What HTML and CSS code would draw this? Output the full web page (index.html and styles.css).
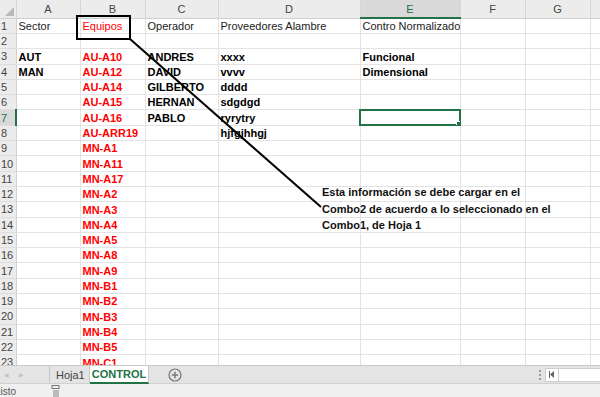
FILE: index.html
```html
<!DOCTYPE html>
<html lang="es">
<head>
  <meta charset="UTF-8">
  <meta name="viewport" content="width=device-width, initial-scale=1.0">
  <title>CONTROL</title>
  <link rel="stylesheet" href="styles.css">
</head>
<body>

<div class="app">
  <div class="sheet">
    <table class="grid">
      <colgroup>
        <col class="c-rh"><col class="c-a"><col class="c-b"><col class="c-c"><col class="c-d">
        <col class="c-e"><col class="c-f"><col class="c-g"><col class="c-h">
      </colgroup>
      <thead>
        <tr>
          <th class="corner"><span class="tri"></span></th>
          <th>A</th><th>B</th><th>C</th><th>D</th><th class="sel">E</th><th>F</th><th>G</th><th></th>
        </tr>
      </thead>
      <tbody>
        <tr><th>1</th><td class="head">Sector</td><td class="head red">Equipos</td><td class="head">Operador</td><td class="head">Proveedores Alambre</td><td class="head">Contro Normalizado</td><td></td><td></td><td></td></tr>
        <tr><th>2</th><td></td><td></td><td></td><td></td><td></td><td></td><td></td><td></td></tr>
        <tr><th>3</th><td>AUT</td><td class="red">AU-A10</td><td>ANDRES</td><td>xxxx</td><td>Funcional</td><td></td><td></td><td></td></tr>
        <tr><th>4</th><td>MAN</td><td class="red">AU-A12</td><td>DAVID</td><td>vvvv</td><td>Dimensional</td><td></td><td></td><td></td></tr>
        <tr><th>5</th><td></td><td class="red">AU-A14</td><td>GILBERTO</td><td>dddd</td><td></td><td></td><td></td><td></td></tr>
        <tr><th>6</th><td></td><td class="red">AU-A15</td><td>HERNAN</td><td>sdgdgd</td><td></td><td></td><td></td><td></td></tr>
        <tr><th class="sel">7</th><td></td><td class="red">AU-A16</td><td>PABLO</td><td>ryrytry</td><td class="active"></td><td></td><td></td><td></td></tr>
        <tr><th>8</th><td></td><td class="red">AU-ARR19</td><td></td><td>hjfgjhhgj</td><td></td><td></td><td></td><td></td></tr>
        <tr><th>9</th><td></td><td class="red">MN-A1</td><td></td><td></td><td></td><td></td><td></td><td></td></tr>
        <tr><th>10</th><td></td><td class="red">MN-A11</td><td></td><td></td><td></td><td></td><td></td><td></td></tr>
        <tr><th>11</th><td></td><td class="red">MN-A17</td><td></td><td></td><td></td><td></td><td></td><td></td></tr>
        <tr><th>12</th><td></td><td class="red">MN-A2</td><td></td><td></td><td></td><td></td><td></td><td></td></tr>
        <tr><th>13</th><td></td><td class="red">MN-A3</td><td></td><td></td><td></td><td></td><td></td><td></td></tr>
        <tr><th>14</th><td></td><td class="red">MN-A4</td><td></td><td></td><td></td><td></td><td></td><td></td></tr>
        <tr><th>15</th><td></td><td class="red">MN-A5</td><td></td><td></td><td></td><td></td><td></td><td></td></tr>
        <tr><th>16</th><td></td><td class="red">MN-A8</td><td></td><td></td><td></td><td></td><td></td><td></td></tr>
        <tr><th>17</th><td></td><td class="red">MN-A9</td><td></td><td></td><td></td><td></td><td></td><td></td></tr>
        <tr><th>18</th><td></td><td class="red">MN-B1</td><td></td><td></td><td></td><td></td><td></td><td></td></tr>
        <tr><th>19</th><td></td><td class="red">MN-B2</td><td></td><td></td><td></td><td></td><td></td><td></td></tr>
        <tr><th>20</th><td></td><td class="red">MN-B3</td><td></td><td></td><td></td><td></td><td></td><td></td></tr>
        <tr><th>21</th><td></td><td class="red">MN-B4</td><td></td><td></td><td></td><td></td><td></td><td></td></tr>
        <tr><th>22</th><td></td><td class="red">MN-B5</td><td></td><td></td><td></td><td></td><td></td><td></td></tr>
        <tr><th>23</th><td></td><td class="red">MN-C1</td><td></td><td></td><td></td><td></td><td></td><td></td></tr>
      </tbody>
    </table>

    <!-- drawing shapes over the grid -->
    <div class="callout-box"></div>
    <svg class="callout-line" width="600" height="365" viewBox="0 0 600 365">
      <line x1="130" y1="39" x2="321" y2="207" stroke="#000" stroke-width="2"/>
    </svg>
    <div class="note">
      Esta información se debe cargar en el<br>
      Combo2 de acuerdo a lo seleccionado en el<br>
      Combo1, de Hoja 1
    </div>
  </div>

  <div class="tabbar">
    <div class="nav">
      <span class="arrow">&#9664;</span>
      <span class="arrow">&#9654;</span>
    </div>
    <div class="tab">Hoja1</div>
    <div class="tab current">CONTROL</div>
    <div class="add">
      <svg width="14" height="14" viewBox="0 0 14 14">
        <circle cx="7" cy="7" r="6" fill="none" stroke="#777" stroke-width="1.2"/>
        <path d="M7 3.8v6.4M3.8 7h6.4" stroke="#777" stroke-width="1.4"/>
      </svg>
    </div>
    <div class="spacer"></div>
    <div class="dots">
      <span></span><span></span><span></span>
    </div>
    <div class="hscroll">
      <span class="sarrow">
        <svg width="6" height="7" viewBox="0 0 6 7"><path d="M5 0v7L1 3.5z" fill="#666"/><rect x="0" y="0" width="1" height="7" fill="#666"/></svg>
      </span>
      <span class="track"></span>
    </div>
  </div>

  <div class="statusbar">
    <span class="ready">Listo</span>
    <span class="macro">
      <svg width="10" height="12" viewBox="0 0 10 12">
        <rect x="1" y="0.5" width="7" height="3" fill="none" stroke="#777"/>
        <rect x="2" y="5" width="6" height="7" fill="#bbb"/>
      </svg>
    </span>
  </div>
</div>

</body>
</html>
```

FILE: styles.css
```css
html, body {
  margin: 0;
  padding: 0;
  background: #fff;
  overflow: hidden;
}
body {
  font-family: "Liberation Sans", Arial, sans-serif;
}
.app {
  width: 600px;
  height: 397px;
  display: flex;
  flex-direction: column;
}
.sheet {
  position: relative;
  height: 365px;
  overflow: hidden;
  flex: none;
}

/* grid */
.grid {
  border-collapse: collapse;
  table-layout: fixed;
  width: 630px;
}
.c-rh { width: 16px; }
.c-a { width: 64px; }
.c-b { width: 65px; }
.c-c { width: 73px; }
.c-d { width: 142px; }
.c-e { width: 100px; }
.c-f { width: 65px; }
.c-g { width: 65px; }
.c-h { width: 40px; }

.grid th, .grid td {
  padding: 0;
  white-space: nowrap;
  overflow: hidden;
  font-size: 11px;
}
.grid thead th {
  height: 17px;
  background: #ececec;
  color: #444;
  font-weight: normal;
  text-align: center;
  border-right: 1px solid #d6d6d6;
  border-bottom: 1px solid #cfcfcf;
}
.grid thead th.sel {
  background: #d9d9d9;
  color: #217346;
  border-bottom: 2px solid #217346;
}
.grid thead th.corner {
  position: relative;
}
.tri {
  position: absolute;
  right: 2px;
  bottom: 2px;
  width: 0;
  height: 0;
  border-left: 9px solid transparent;
  border-bottom: 9px solid #b9b9b9;
}
.grid tbody tr {
  height: 15.3px;
}
.grid tbody th {
  background: #ececec;
  color: #444;
  font-weight: normal;
  text-align: left;
  padding-left: 1px;
  border-right: 1px solid #d0d0d0;
  border-bottom: 1px solid #dedede;
  line-height: 14px;
}
.grid tbody th.sel {
  background: #d9d9d9;
  color: #217346;
  border-right: 2px solid #217346;
}
.grid td {
  border: 1px solid #e3e3e3;
  padding-left: 2px;
  line-height: 14px;
  font-weight: bold;
  color: #000;
  vertical-align: bottom;
}
.grid td.head {
  font-weight: normal;
  color: #222;
}
.grid td.red {
  color: #ff0000;
}
.grid td.active {
  position: relative;
  outline: 2px solid #217346;
  outline-offset: -1px;
}
.grid td.active::after {
  content: "";
  position: absolute;
  right: -2px;
  bottom: -2px;
  width: 4px;
  height: 4px;
  background: #217346;
  border: 1px solid #fff;
}

/* shapes */
.callout-box {
  position: absolute;
  left: 76px;
  top: 15px;
  width: 51px;
  height: 21px;
  border: 2px solid #000;
}
.callout-line {
  position: absolute;
  left: 0;
  top: 0;
}
.note {
  position: absolute;
  left: 322px;
  top: 184px;
  font-size: 11px;
  font-weight: bold;
  line-height: 16.5px;
  color: #111;
  white-space: nowrap;
}

/* sheet tabs */
.tabbar {
  height: 17px;
  background: #e4e4e4;
  border-top: 1px solid #c9c9c9;
  border-bottom: 1px solid #d0d0d0;
  display: flex;
  align-items: stretch;
  flex: none;
}
.nav {
  width: 50px;
  display: flex;
  align-items: center;
  gap: 10px;
  padding-left: 4px;
  box-sizing: border-box;
  border-right: 1px solid #c6c6c6;
}
.arrow {
  color: #c0c0c0;
  font-size: 6px;
}
.tab {
  font-size: 11px;
  color: #444;
  padding: 0 0 0 6px;
  width: 40px;
  box-sizing: border-box;
  display: flex;
  align-items: center;
  border-right: 1px solid #c6c6c6;
}
.tab.current {
  width: 59px;
  background: #fff;
  color: #217346;
  font-weight: bold;
  padding: 0;
  justify-content: center;
  border-bottom: 2px solid #217346;
  margin-bottom: -1px;
}
.add {
  margin-left: 19px;
  display: flex;
  align-items: center;
}
.spacer {
  flex: 1;
}
.dots {
  width: 10px;
  display: flex;
  flex-direction: column;
  align-items: center;
  justify-content: center;
  gap: 2px;
}
.dots span {
  width: 2px;
  height: 2px;
  background: #999;
}
.hscroll {
  width: 56px;
  display: flex;
  align-items: center;
  margin-right: -1px;
}
.sarrow {
  width: 12px;
  height: 12px;
  background: #fff;
  border: 1px solid #cfcfcf;
  display: flex;
  align-items: center;
  justify-content: center;
}
.track {
  flex: 1;
  height: 12px;
  background: #fff;
  border: 1px solid #cfcfcf;
  border-left: none;
}

/* status */
.statusbar {
  flex: 1;
  background: #f0f0f0;
  display: flex;
  align-items: flex-end;
}
.ready {
  font-size: 10px;
  color: #555;
  margin-left: -5px;
  line-height: 11px;
}
.macro {
  margin-left: 35px;
  display: flex;
  align-items: flex-end;
}
```
